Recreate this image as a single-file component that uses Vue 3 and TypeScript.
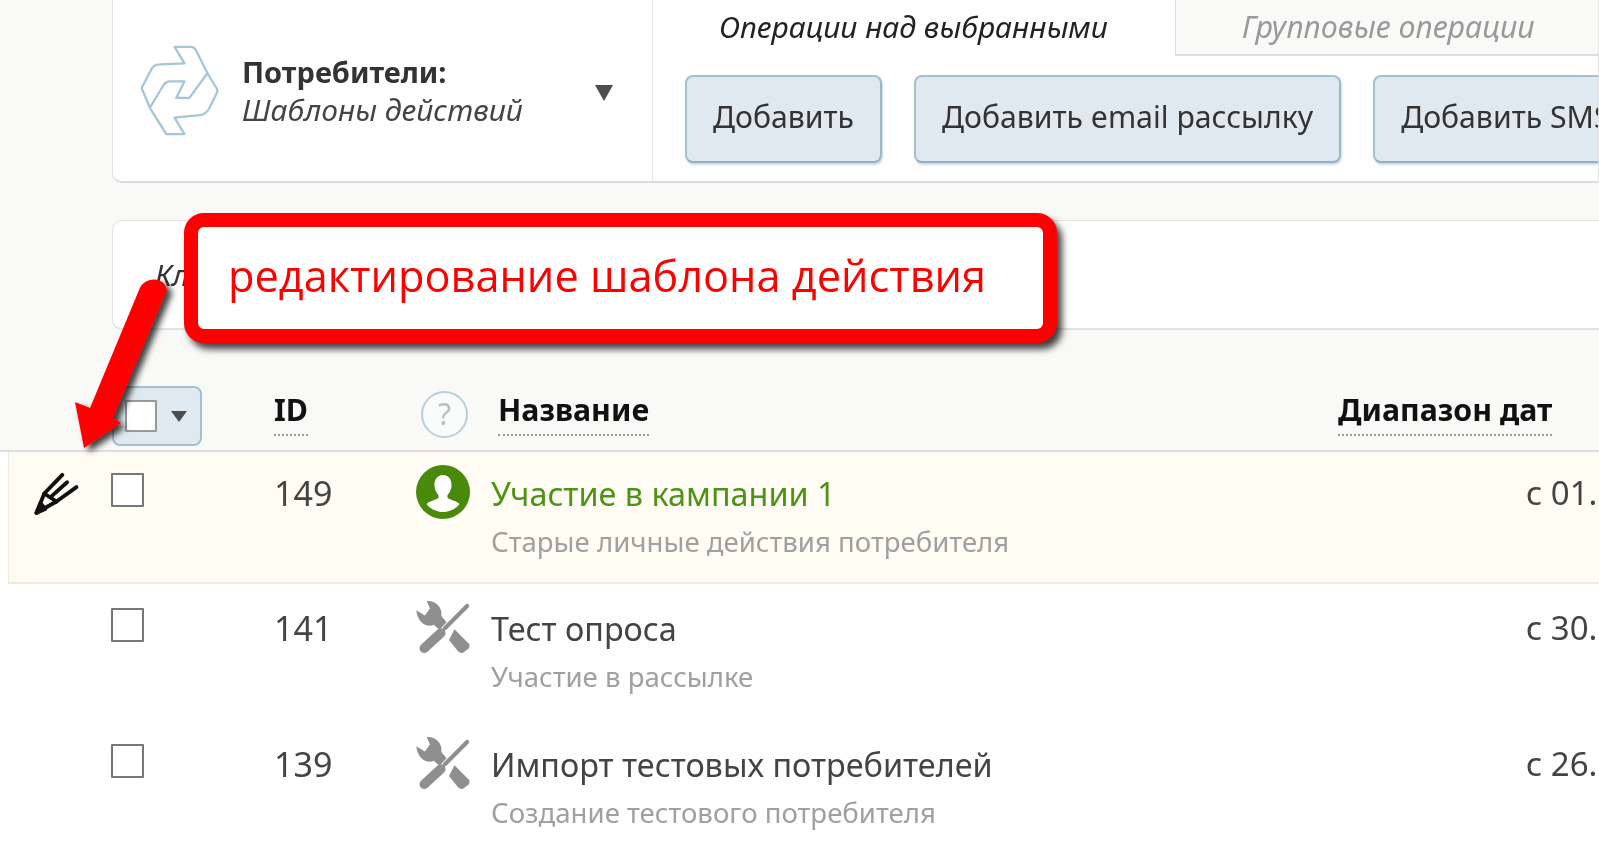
<script setup lang="ts">
interface Row { id: number; title: string; sub: string; date: string; kind: 'person' | 'tools'; active?: boolean }
const rows: Row[] = [
  { id: 149, title: 'Участие в кампании 1', sub: 'Старые личные действия потребителя', date: 'с 01.', kind: 'person', active: true },
  { id: 141, title: 'Тест опроса', sub: 'Участие в рассылке', date: 'с 30.', kind: 'tools' },
  { id: 139, title: 'Импорт тестовых потребителей', sub: 'Создание тестового потребителя', date: 'с 26.', kind: 'tools' }
]
</script>

<template>
  <div class="page">
    <section class="head">
      <div class="brand">
        <svg class="logo" viewBox="40 40 240 275" fill="none" stroke="#a6c6d8" stroke-width="7" stroke-linejoin="round">
          <path d="M145 45H195Q205 45 210 55L245 125L190 200H150L175 150H130Q120 150 112 160L70 230L45 170L75 112Q83 98 100 98L175 95Z" />
          <path d="M245 125L272 170Q278 178 272 188L250 232Q240 250 222 252L145 260L175 310H120L70 230" />
        </svg>
        <div class="brand-text">
          <div class="brand-title">Потребители:</div>
          <div class="brand-sub">Шаблоны действий</div>
        </div>
        <span class="caret big"></span>
      </div>
      <div class="ops">
        <div class="tabs">
          <div class="tab on">Операции над выбранными</div>
          <div class="tab off">Групповые операции</div>
        </div>
        <div class="btns">
          <button class="btn">Добавить</button>
          <button class="btn">Добавить email рассылку</button>
          <button class="btn">Добавить SMS</button>
        </div>
      </div>
    </section>

    <section class="filter"><span class="filter-text">Кл</span></section>

    <section class="thead">
      <div class="c-sel"><span class="sel-all"><i class="box small"></i><span class="caret"></span></span></div>
      <div class="c-id"><span class="th">ID</span></div>
      <div class="c-ico"><span class="help">?</span></div>
      <div class="c-name"><span class="th">Название</span></div>
      <div class="c-date"><span class="th">Диапазон дат</span></div>
    </section>

    <section class="tbody">
      <div v-for="r in rows" :key="r.id" class="row" :class="{ active: r.active }">
        <div class="c-edit">
          <svg v-if="r.active" class="pencil" viewBox="40 60 140 140" fill="none" stroke="#111" stroke-width="12" stroke-linecap="round" stroke-linejoin="round">
            <path d="M48 190L72 130L128 72" />
            <path d="M48 190L110 155L172 110" />
            <path d="M95 138L143 95" />
            <path d="M72 130L110 155" />
            <path d="M48 190L60 160L75 178Z" fill="#111" />
          </svg>
        </div>
        <div class="c-sel"><i class="box"></i></div>
        <div class="c-id">{{ r.id }}</div>
        <div class="c-ico">
          <svg v-if="r.kind === 'person'" class="ico" viewBox="0 0 54 54">
            <circle cx="27" cy="27" r="27" fill="#4a8a0a" />
            <path d="M27 10c6 0 9 5 8.500 11-.3 4-2 7-4 9v3c3 2 9 3 12 6-3.500 4.500-9.500 8-16.500 8s-13-3.500-16.500-8c3-3 9-4 12-6v-3c-2-2-3.700-5-4-9C18 15 21 10 27 10z" fill="#fff" />
          </svg>
          <svg v-else class="ico tools" viewBox="44 28 170 166">
            <g fill="#8f8f8f">
              <path d="M78 30C102 26 128 48 124 76L140 96L118 120L100 104C78 114 48 96 45 58L72 75L88 53Z" />
              <path d="M165 118L212 165Q214 176 206 182L192 192Q184 194 177 188L148 152Z" />
            </g>
            <g stroke="#8f8f8f" stroke-linecap="round">
              <path d="M205 45L135 115" stroke-width="13" />
              <path d="M122 130L70 178" stroke-width="30" />
            </g>
          </svg>
        </div>
        <div class="c-name">
          <div class="title">{{ r.title }}</div>
          <div class="sub">{{ r.sub }}</div>
        </div>
        <div class="c-date">{{ r.date }}</div>
      </div>
    </section>

    <div class="callout">редактирование шаблона действия</div>
    <svg class="arrow" width="180" height="200" viewBox="0 0 180 200">
      <defs>
        <filter id="ds" x="-30%" y="-30%" width="160%" height="160%">
          <feDropShadow dx="5" dy="4" stdDeviation="3" flood-color="#000" flood-opacity=".75" />
        </filter>
      </defs>
      <path d="M65 16C69 3 90 1 93 16L39 144L47 149L10 174L1 128L16 134Z" fill="#fe0000" filter="url(#ds)" />
    </svg>
  </div>
</template>

<style scoped>
* { box-sizing: border-box; }
.page {
  position: relative;
  width: 1599px;
  height: 850px;
  overflow: hidden;
  background: #f9f9f8;
  font-family: "Noto Sans", sans-serif;
  color: #333;
  filter: blur(.6px);
}
.head {
  display: flex;
  margin-left: 112px;
  height: 183px;
  background: #fff;
  border: 1px solid #e2e2e0;
  border-top: 0;
  border-bottom: 2px solid #dcdcda;
  border-radius: 0 0 0 10px;
}
.brand {
  width: 540px;
  flex: none;
  display: flex;
  align-items: center;
  padding-left: 27px;
  border-right: 1px solid #e6e6e6;
}
.logo { width: 79px; height: 91px; flex: none; }
.brand-text { margin-left: 23px; margin-top: 1px; }
.brand-title { font-size: 29px; line-height: 38px; font-weight: 700; color: #333; }
.brand-sub { font-size: 30px; line-height: 38px; font-style: italic; color: #444; }
.caret {
  display: block;
  width: 0;
  height: 0;
  border-left: 8px solid transparent;
  border-right: 8px solid transparent;
  border-top: 11px solid #4d4d4d;
}
.big {
  margin-left: auto;
  margin-right: 39px;
  margin-top: 5px;
  border-left-width: 9px;
  border-right-width: 9px;
  border-top-width: 16px;
}
.ops { flex: 1; min-width: 0; overflow: hidden; }
.tabs { display: flex; height: 56px; }
.tab { font-size: 30px; font-style: italic; line-height: 54px; }
.tab.on { width: 522px; padding-left: 66px; color: #222; }
.tab.off {
  flex: 1;
  padding-left: 66px;
  font-size: 30.400px;
  color: #9a9a9a;
  background: #f9f9f8;
  border-left: 1px solid #dedede;
  border-bottom: 2px solid #dedede;
}
.btns { display: flex; gap: 32px; padding: 19px 0 0 32px; }
.btn {
  flex: none;
  height: 88px;
  padding: 0 26px 6px;
  font: 400 30.200px "Noto Sans", sans-serif;
  color: #333;
  background: #e1e9f0;
  border: 2px solid #a4c0d3;
  border-right-color: #9ab8cc;
  border-bottom-color: #8fb0c6;
  border-radius: 8px;
  box-shadow: 1px 2px 2px rgba(120, 150, 170, .35);
  white-space: nowrap;
}
.filter {
  margin: 37px 0 0 112px;
  height: 110px;
  background: #fff;
  border: 1px solid #e2e2e0;
  border-right: 0;
  border-bottom-width: 2px;
  border-radius: 10px 0 0 10px;
  display: flex;
  align-items: center;
  padding-left: 42px;
}
.filter-text { font-size: 30px; font-style: italic; color: #333; }
.thead {
  position: relative;
  height: 122px;
  border-bottom: 2px solid #dedede;
}
.thead > div { position: absolute; top: 59px; }
.thead .c-sel { left: 112px; top: 60px; }
.thead .c-id { left: 274px; }
.thead .c-ico { left: 421px; top: 61px; }
.thead .c-name { left: 498px; }
.thead .c-date { left: 1338px; }
.th {
  display: inline-block;
  font-size: 30.300px;
  line-height: 42px;
  font-weight: 700;
  color: #111;
  border-bottom: 2px dotted #999;
  padding-bottom: 3px;
}
.sel-all {
  display: flex;
  align-items: center;
  gap: 14px;
  width: 90px;
  height: 60px;
  padding-left: 11px;
  margin-top: -4px;
  background: #e1e9f0;
  border: 2px solid #a4c0d3;
  border-radius: 8px;
}
.help {
  display: block;
  width: 47px;
  height: 47px;
  border: 2px solid #b7d0dd;
  border-radius: 50%;
  font-size: 30px;
  line-height: 42px;
  text-align: center;
  color: #b5bfc6;
  background: #fafbfb;
}
.box { display: block; width: 33px; height: 34px; background: #fff; border: 2px solid #777; border-radius: 1px; }
.box.small { width: 32px; height: 32px; border-color: #999; }
.tbody { background: #fff; height: 400px; }
.row {
  display: flex;
  height: 136px;
  margin-left: 8px;
  padding-top: 24px;
  font-size: 32.400px;
  line-height: 42px;
  color: #444;
}
.row.active {
  height: 132px;
  padding-top: 21px;
  background: #fffdf3;
  border-left: 1px solid #ecebe0;
  border-bottom: 2px solid #ecebdf;
}
.row .c-edit { width: 103px; flex: none; padding-left: 25px; }
.row.active .c-edit { width: 102px; }
.pencil { display: block; width: 45px; height: 45px; margin-top: -2px; }
.row .c-sel { width: 163px; flex: none; }
.row .c-id { width: 142px; flex: none; font-size: 34px; margin-top: -1px; }
.row .c-ico { width: 75px; flex: none; margin-top: -8px; }
.ico { display: block; width: 54px; height: 54px; }
.row .c-name { flex: none; width: 1035px; margin-top: -1px; }
.title { white-space: nowrap; }
.active .title { color: #4e9316; }
.sub { font-size: 27.600px; line-height: 36px; margin-top: 9px; color: #a0a0a0; white-space: nowrap; }
.active .sub { margin-top: 9px; }
.row .c-date { white-space: nowrap; font-size: 33px; margin-top: -1px; }
.callout {
  position: absolute;
  left: 184px;
  top: 213px;
  width: 873px;
  height: 130px;
  padding-left: 30px;
  background: #fff;
  border: 14px solid #fe0000;
  border-radius: 20px;
  box-shadow: 5px 6px 7px rgba(0, 0, 0, .75);
  font-family: "Open Sans", sans-serif;
  font-size: 43.300px;
  line-height: 98px;
  color: #fe0000;
  white-space: nowrap;
}
.arrow { position: absolute; left: 74px; top: 274px; }
</style>
